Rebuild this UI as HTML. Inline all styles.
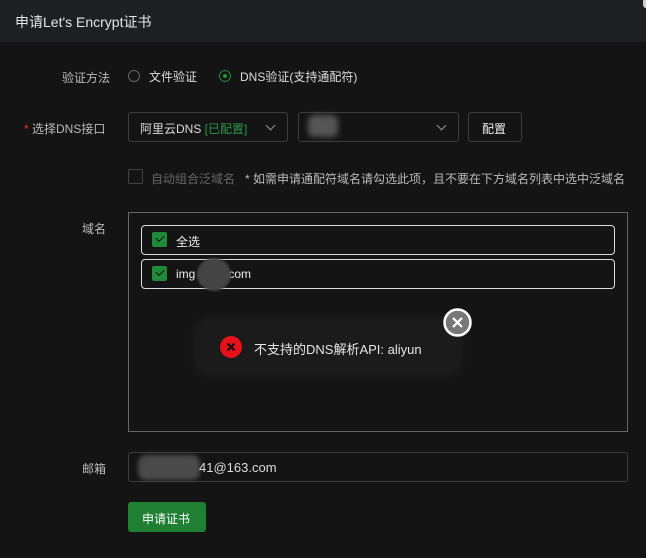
<!DOCTYPE html>
<html><head><meta charset="utf-8"><style>
*{box-sizing:border-box;margin:0;padding:0}
body{width:646px;height:558px;background:#141414;font-family:"Liberation Sans","Noto Sans CJK SC",sans-serif;color:#ccc;font-size:13px;position:relative;overflow:hidden}
.a{position:absolute;white-space:nowrap}
.hdr{left:0;top:0;width:646px;height:42px;background:#1e1f22;color:#e6e6e6;font-size:14px;padding:12px 0 0 15px}
.lbl{color:#bbb;font-size:12px}
.box{border:1px solid #3d3d3d;border-radius:3px}
.chk{width:15px;height:15px;background:#1f8a3a;border-radius:2px}
.chk:after{content:"";position:absolute;left:4px;top:3px;width:7px;height:4px;border-left:1.5px solid #111;border-bottom:1.5px solid #111;transform:rotate(-45deg)}
.arrow{width:7px;height:7px;border-right:1px solid #999;border-bottom:1px solid #999;transform:rotate(45deg)}
</style></head><body>
<div class="a hdr">申请Let's Encrypt证书</div>
<div class="a" style="right:0;top:0;width:3px;height:8px;background:#ccc;border-bottom-left-radius:3px"></div>

<div class="a lbl" style="left:62px;top:69px">验证方法</div>
<div class="a" style="left:128px;top:70px;width:12px;height:12px;border:1px solid #666;border-radius:50%"></div>
<div class="a" style="left:149px;top:68px;color:#ddd;font-size:12px">文件验证</div>
<div class="a" style="left:219px;top:70px;width:12px;height:12px;border:1px solid #1f8a3a;border-radius:50%"></div>
<div class="a" style="left:223px;top:74px;width:4px;height:4px;background:#1f9a40;border-radius:50%"></div>
<div class="a" style="left:240px;top:68px;color:#ddd;font-size:12px">DNS验证(支持通配符)</div>

<div class="a lbl" style="left:24px;top:120px"><span style="color:#e33">*</span> 选择DNS接口</div>
<div class="a box" style="left:128px;top:112px;width:160px;height:30px"></div>
<div class="a" style="left:140px;top:120px;color:#ddd;font-size:12px">阿里云DNS <span style="color:#2a9a48">[已配置]</span></div>
<div class="a arrow" style="left:267px;top:122px"></div>
<div class="a box" style="left:298px;top:112px;width:161px;height:30px"></div>
<div class="a" style="left:308px;top:115px;width:30px;height:22px;background:#555;border-radius:6px;filter:blur(3px)"></div>
<div class="a arrow" style="left:438px;top:122px"></div>
<div class="a box" style="left:468px;top:112px;width:54px;height:30px;color:#eee;font-size:12px;padding:7px 0 0 13px">配置</div>

<div class="a" style="left:128px;top:169px;width:15px;height:15px;border:1px solid #444;border-radius:2px"></div>
<div class="a" style="left:151px;top:170px;color:#666;font-size:12px">自动组合泛域名</div>
<div class="a" style="left:245px;top:170px;color:#bbb;font-size:12px">* 如需申请通配符域名请勾选此项，且不要在下方域名列表中选中泛域名</div>

<div class="a lbl" style="left:82px;top:220px">域名</div>
<div class="a" style="left:128px;top:212px;width:500px;height:220px;border:1px solid #666"></div>
<div class="a" style="left:141px;top:225px;width:474px;height:30px;border:1px solid #ddd;border-radius:4px"></div>
<div class="a chk" style="left:152px;top:232px"></div>
<div class="a" style="left:176px;top:233px;color:#eee;font-size:12px">全选</div>
<div class="a" style="left:141px;top:259px;width:474px;height:30px;border:1px solid #ddd;border-radius:4px"></div>
<div class="a chk" style="left:152px;top:266px"></div>
<div class="a" style="left:176px;top:267px;color:#eee;font-size:12px">img<span style="display:inline-block;width:33px"></span>com</div>
<div class="a" style="left:197px;top:258px;width:34px;height:33px;background:#444;border-radius:50%;filter:blur(1px)"></div>

<div class="a" style="left:198px;top:323px;width:260px;height:48px;background:#1b1b1b;border-radius:4px;box-shadow:0 0 16px rgba(255,255,255,.08)"></div>
<svg class="a" style="left:220px;top:336px" width="22" height="22"><circle cx="11" cy="11" r="11" fill="#e8101a"/><path d="M7.5 7.5L14.5 14.5M14.5 7.5L7.5 14.5" stroke="#111" stroke-width="2.2"/></svg>
<div class="a" style="left:254px;top:339px;color:#e6e6e6;font-size:13px">不支持的DNS解析API: aliyun</div>
<svg class="a" style="left:443px;top:308px" width="29" height="29"><circle cx="14.5" cy="14.5" r="13" fill="#777" stroke="#fff" stroke-width="2.5"/><path d="M10 10L19 19M19 10L10 19" stroke="#fff" stroke-width="2.2"/></svg>

<div class="a lbl" style="left:82px;top:460px">邮箱</div>
<div class="a box" style="left:128px;top:452px;width:500px;height:30px"></div>
<div class="a" style="left:138px;top:455px;width:62px;height:25px;background:#4a4a4a;border-radius:8px;filter:blur(2px)"></div>
<div class="a" style="left:199px;top:460px;color:#ddd;font-size:13px">41@163.com</div>

<div class="a" style="left:128px;top:502px;width:78px;height:30px;background:#1f7f33;border-radius:3px;color:#fff;font-size:12px;padding:8px 0 0 14px">申请证书</div>
</body></html>
